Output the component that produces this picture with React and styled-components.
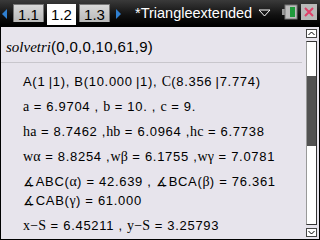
import React from "react";
import styled, { createGlobalStyle } from "styled-components";

const sans = `"Liberation Sans", Arial, sans-serif`;
const serif = `"Liberation Serif", "Times New Roman", serif`;

const Global = createGlobalStyle`
  html, body { margin: 0; padding: 0; background: #000; }
  * { box-sizing: border-box; }
`;

const Screen = styled.div`
  width: 320px;
  height: 240px;
  display: flex;
  flex-direction: column;
  background: #000;
  overflow: hidden;
`;

const TopBar = styled.div`
  height: 25px;
  display: flex;
  align-items: flex-start;
  padding: 4px 3px 0 2px;
  background: linear-gradient(#3a3a3a, #111 60%, #000);
`;

const Arrow = styled.div`
  width: 0;
  height: 0;
  margin-top: 5px;
  border-top: 5px solid transparent;
  border-bottom: 5px solid transparent;
  ${p => (p.$dir === "left"
    ? "border-right: 5px solid #2f7fd0; margin-right: 6px;"
    : "border-left: 5px solid #2f7fd0; margin-left: 3px;")}
`;

const Tab = styled.div`
  width: ${p => (p.$active ? "29px" : "31px")};
  height: ${p => (p.$active ? "21px" : "18px")};
  margin-right: 3px;
  display: flex;
  align-items: flex-start;
  justify-content: center;
  padding-top: 1px;
  font: 15px ${sans};
  color: #000;
  background: ${p => (p.$active ? "#fff" : "linear-gradient(#d8d8d8, #b8b8b8)")};
  border: 1px solid ${p => (p.$active ? "#fff" : "#777")};
  border-bottom: none;
`;

const Title = styled.div`
  margin-left: 14px;
  margin-top: 1px;
  font: 14.5px ${sans};
  color: #fff;
  display: flex;
  align-items: center;
  gap: 6px;
  flex: 1;
`;

const Status = styled.div`
  display: flex;
  gap: 3px;
  align-items: center;
`;

const Battery = () => (
  <svg width="16" height="16" viewBox="0 0 16 16">
    <rect x="0" y="5" width="3" height="6" fill="#9a9a9a" />
    <rect x="3" y="1" width="12" height="14" fill="#bdbdbd" stroke="#777" />
    <rect x="8" y="3" width="5" height="10" fill="#1f9a3c" />
  </svg>
);

const Close = () => (
  <svg width="16" height="16" viewBox="0 0 16 16">
    <rect x="0" y="0" width="16" height="16" fill="#b9b9b9" />
    <path d="M4 4 L12 12 M12 4 L4 12" stroke="#e0406a" strokeWidth="2" />
  </svg>
);

const Doc = styled.div`
  flex: 1;
  display: flex;
  background: #e7e4ec;
  border: 1px solid #000;
  border-top: 2px solid #000;
`;

const Content = styled.div`
  flex: 1;
  padding-top: 11px;
`;

const Entry = styled.div`
  height: 25px;
  padding-left: 5px;
  border-bottom: 1px solid #c8c6cc;
  margin-right: 4px;
  font: 15px ${sans};
  letter-spacing: 0.3px;
  color: #000;
  white-space: nowrap;
`;

const Fn = styled.span`
  font: italic 15px ${serif};
  letter-spacing: 0;
`;

const Outputs = styled.div`
  padding: 9px 0 0 22px;
  display: flex;
  flex-direction: column;
  gap: 6px;
`;

const Line = styled.div`
  font: 13px ${sans};
  line-height: 19px;
  letter-spacing: 0.7px;
  color: #000;
  white-space: nowrap;
`;

const V = styled.span`
  font: 14px ${serif};
  letter-spacing: 0.2px;
`;

const Scroll = styled.div`
  width: 11px;
  margin: 2px 2px 2px 0;
  display: flex;
  flex-direction: column;
  gap: 3px;
`;

const ScrollBtn = styled.div`
  height: 9px;
  border: 1px solid #444;
  background: #fff;
  display: flex;
  align-items: center;
  justify-content: center;
`;

const Track = styled.div`
  flex: 1;
  border: 1px solid #333;
  border-left-color: #999;
  background: #fff;
  padding-top: 34px;
`;

const Thumb = styled.div`
  height: 70px;
  background: #525252;
`;

const Caret = ({ down }) => (
  <svg width="7" height="5" viewBox="0 0 7 5">
    <path d={down ? "M0.5 1 L3.5 4 L6.5 1" : "M0.5 4 L3.5 1 L6.5 4"} stroke="#000" fill="none" />
  </svg>
);

const Angle = styled.span`
  font-size: 13px;
`;

export default function App() {
  return (
    <Screen>
      <Global />
      <TopBar>
        <Arrow $dir="left" />
        <Tab>1.1</Tab>
        <Tab $active>1.2</Tab>
        <Tab>1.3</Tab>
        <Arrow $dir="right" />
        <Title>
          *Triangleextended
          <svg width="13" height="8" viewBox="0 0 13 8">
            <path d="M1 1 L12 1 L6.5 7 Z" fill="none" stroke="#fff" />
          </svg>
        </Title>
        <Status>
          <Battery />
          <Close />
        </Status>
      </TopBar>
      <Doc>
        <Content>
          <Entry>
            <Fn>solvetri</Fn>(0,0,0,10,61,9)
          </Entry>
          <Outputs>
            <Line>A(1{"\u2009"}|1), B(10.000{"\u2009"}|1), <V>C</V>(8.356{"\u2009"}|7.774)</Line>
            <Line><V>a</V> = 6.9704 , <V>b</V> = 10. , <V>c</V> = 9.</Line>
            <Line><V>ha</V> = 8.7462 ,<V>hb</V> = 6.0964 ,<V>hc</V> = 6.7738</Line>
            <Line><V>wα</V> = 8.8254 ,<V>wβ</V> = 6.1755 ,<V>wγ</V> = 7.0781</Line>
            <Line>
              <Angle>∡</Angle>ABC(<V>α</V>) = 42.639 , <Angle>∡</Angle>BCA(<V>β</V>) = 76.361
              <br />
              <Angle>∡</Angle>CAB(<V>γ</V>) = 61.000
            </Line>
            <Line><V>x−S</V> = 6.45211 , <V>y−S</V> = 3.25793</Line>
          </Outputs>
        </Content>
        <Scroll>
          <ScrollBtn><Caret /></ScrollBtn>
          <Track><Thumb /></Track>
          <ScrollBtn><Caret down /></ScrollBtn>
        </Scroll>
      </Doc>
    </Screen>
  );
}
